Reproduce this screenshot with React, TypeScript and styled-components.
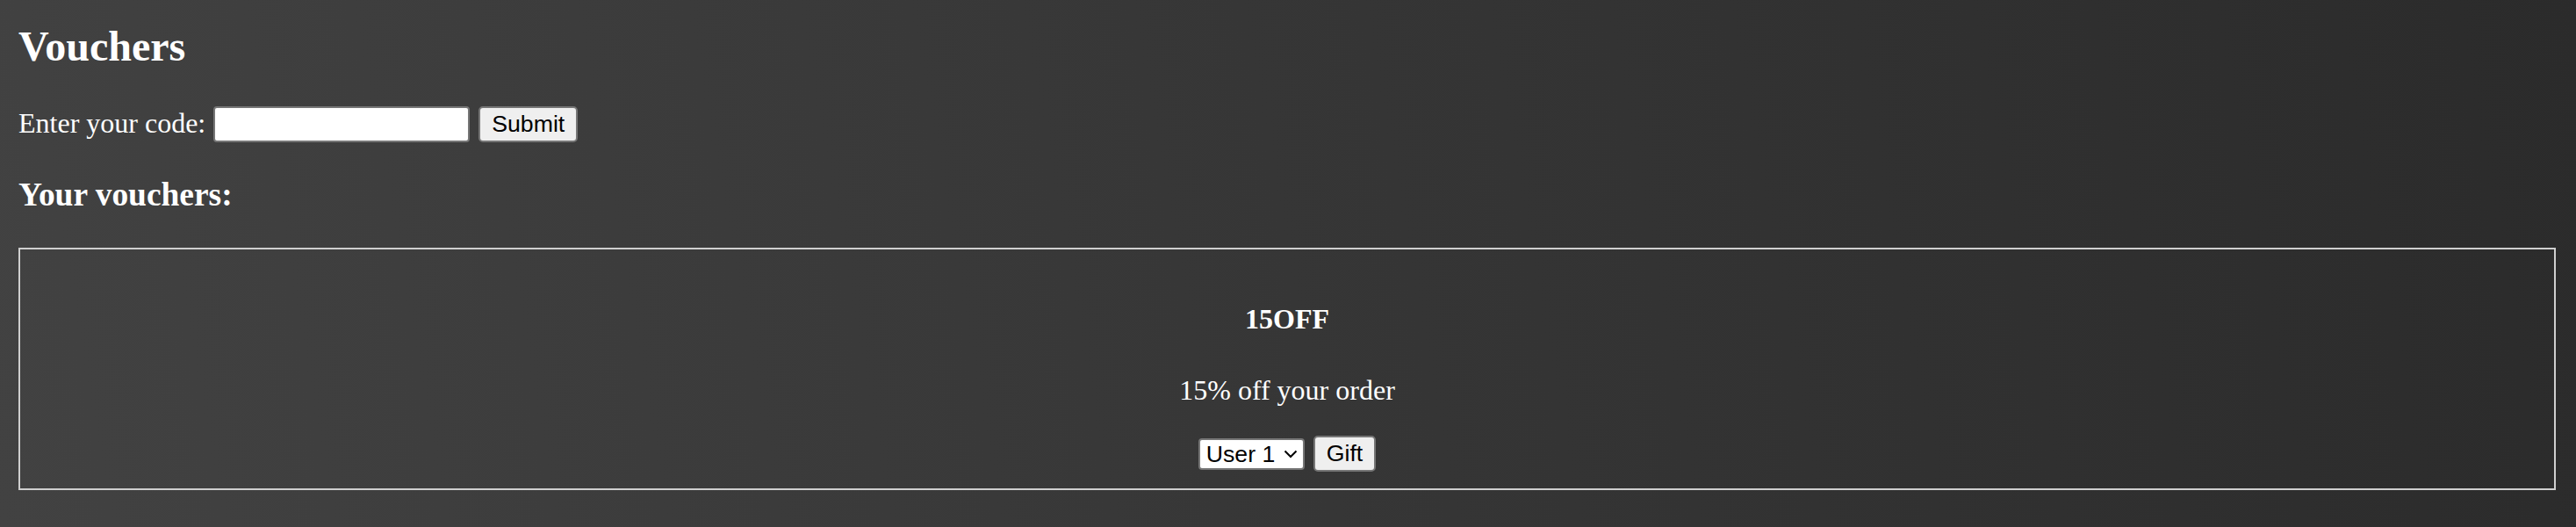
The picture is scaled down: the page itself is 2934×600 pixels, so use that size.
import styled, { createGlobalStyle } from "styled-components";

const GlobalStyle = createGlobalStyle`
  html, body, #root {
    height: 100%;
  }
  body {
    margin: 0;
    background: linear-gradient(80deg, #424242 0%, #363636 50%, #2b2b2b 100%);
    color: #ffffff;
    font-family: "Liberation Serif", "Times New Roman", serif;
    font-size: 32px;
  }
`;

const Page = styled.div`
  padding: 0 23px 0 21px;
`;

const Title = styled.h1`
  margin: 25px 0 0;
  font-size: 48px;
  line-height: 55px;
  font-weight: 700;
`;

const CodeForm = styled.form`
  display: flex;
  align-items: center;
  margin-top: 41px;
  height: 41px;
`;

const Label = styled.label`
  line-height: 38px;
  padding-bottom: 3px;
`;

const CodeInput = styled.input`
  box-sizing: border-box;
  width: 292px;
  height: 41px;
  margin-left: 9px;
  border: 2px solid #767676;
  border-radius: 4px;
  background: #ffffff;
  outline: none;
`;

const Button = styled.button<{ $gap?: number }>`
  box-sizing: border-box;
  height: 41px;
  margin-left: ${(p) => p.$gap ?? 10}px;
  padding: 0 13px;
  border: 2px solid #767676;
  border-radius: 5px;
  background: #efefef;
  color: #000000;
  font-family: "Liberation Sans", Arial, sans-serif;
  font-size: 26.67px;
`;

const SubTitle = styled.h3`
  margin: 38px 0 0;
  font-size: 37.44px;
  line-height: 43px;
  font-weight: 700;
`;

const VoucherCard = styled.div`
  box-sizing: border-box;
  height: 276px;
  margin-top: 39px;
  border: 2px solid #cfcfcf;
  padding-top: 61px;
  text-align: center;
`;

const VoucherCode = styled.h4`
  margin: 0;
  font-size: 32px;
  line-height: 37px;
  font-weight: 700;
`;

const VoucherText = styled.p`
  margin: 44px 0 0;
  line-height: 37px;
`;

const GiftRow = styled.div`
  display: flex;
  justify-content: center;
  align-items: center;
  height: 41px;
  margin-top: 33px;
`;

const SelectWrap = styled.div`
  position: relative;
  display: flex;
`;

const UserSelect = styled.select`
  box-sizing: border-box;
  appearance: none;
  width: 121px;
  height: 36px;
  padding: 0 0 0 7px;
  border: 2px solid #767676;
  border-radius: 4px;
  background: #ffffff;
  color: #000000;
  font-family: "Liberation Sans", Arial, sans-serif;
  font-size: 26.67px;
  outline: none;
`;

const Chevron = styled.svg`
  position: absolute;
  right: 8px;
  top: 13px;
  pointer-events: none;
`;

const users = ["User 1", "User 2", "User 3"];

export default function App() {
  return (
    <>
      <GlobalStyle />
      <Page>
        <Title>Vouchers</Title>
        <CodeForm onSubmit={(e) => e.preventDefault()}>
          <Label htmlFor="code">Enter your code:</Label>
          <CodeInput id="code" type="text" />
          <Button type="submit">Submit</Button>
        </CodeForm>
        <SubTitle>Your vouchers:</SubTitle>
        <VoucherCard>
          <VoucherCode>15OFF</VoucherCode>
          <VoucherText>15% off your order</VoucherText>
          <GiftRow>
            <SelectWrap>
              <UserSelect defaultValue="User 1">
                {users.map((u) => (
                  <option key={u}>{u}</option>
                ))}
              </UserSelect>
              <Chevron width="16" height="10" viewBox="0 0 16 10">
                <path d="M1.5 1.5l6.5 6.5 6.5-6.5" fill="none" stroke="#000" strokeWidth="2" />
              </Chevron>
            </SelectWrap>
            <Button type="button">Gift</Button>
          </GiftRow>
        </VoucherCard>
      </Page>
    </>
  );
}
